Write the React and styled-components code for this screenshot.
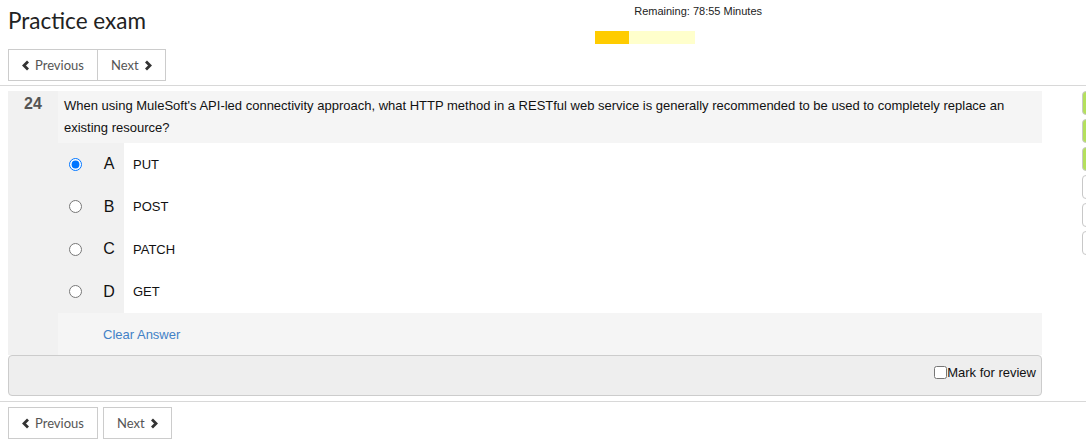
import React from "react";
import styled, { createGlobalStyle } from "styled-components";

const GlobalStyle = createGlobalStyle`
  html, body {
    margin: 0;
    padding: 0;
    background: #fff;
    overflow: hidden;
  }
  body {
    font-family: "Liberation Sans", Arial, sans-serif;
    color: #111;
  }
`;

const Header = styled.div`
  display: flex;
  height: 49px;
  padding: 0 8px;
  box-sizing: border-box;
`;

const TitleCol = styled.div`
  flex: 0 0 587px;
`;

const Title = styled.h1`
  margin: 0;
  padding-top: 7px;
  font-family: Lato, "Open Sans", sans-serif;
  font-weight: 400;
  font-size: 22.5px;
  line-height: 28px;
  color: #222;
`;

const Timer = styled.div`
  width: 167px;
  padding-top: 5px;
`;

const TimerText = styled.div`
  font-size: 11px;
  line-height: 13px;
  text-align: right;
  color: #222;
`;

const TimerBar = styled.div`
  margin-top: 13px;
  width: 100px;
  height: 13px;
  background: #ffffcc;
  display: flex;
`;

const TimerFill = styled.div`
  height: 100%;
  background: #ffcc00;
`;

const NavBar = styled.div`
  display: flex;
  gap: ${(p) => (p.$joined ? "0" : "5px")};
  padding: 0 8px;
`;

const NavButton = styled.button`
  display: flex;
  align-items: center;
  gap: 5px;
  height: 32px;
  padding: 0 13px;
  background: #fff;
  border: 1px solid #ccc;
  margin-left: ${(p) => (p.$joined ? "-1px" : "0")};
  font-family: Lato, "Open Sans", sans-serif;
  font-size: 13px;
  color: #555;
  cursor: pointer;
  &:first-child {
    margin-left: 0;
  }
`;

const Divider = styled.div`
  height: 1px;
  background: #d8d8d8;
  margin: ${(p) => p.$margin};
`;

const Main = styled.div`
  display: flex;
  padding-left: 8px;
  margin-top: 5px;
`;

const Content = styled.div`
  width: 1034px;
  flex: 0 0 1034px;
`;

const QuestionBlock = styled.div`
  display: flex;
`;

const NumberCol = styled.div`
  width: 50px;
  flex: 0 0 50px;
  background: #f1f1f1;
  text-align: center;
  font-weight: bold;
  font-size: 16px;
  line-height: 20px;
  padding-top: 3px;
  color: #555;
`;

const Body = styled.div`
  flex: 1;
`;

const QuestionText = styled.div`
  background: #f5f5f5;
  padding: 4px 6px;
  font-size: 13px;
  line-height: 22px;
  color: #111;
`;

const OptionRow = styled.div`
  display: flex;
  height: 42.5px;
`;

const OptionMark = styled.label`
  width: 66px;
  flex: 0 0 66px;
  box-sizing: border-box;
  background: #f1f1f1;
  display: flex;
  align-items: center;
  padding-left: 11px;
`;

const Radio = styled.input`
  margin: 0;
  width: 13px;
  height: 13px;
`;

const Letter = styled.span`
  width: 20px;
  margin-left: 17px;
  text-align: center;
  font-size: 16px;
  color: #111;
`;

const OptionText = styled.div`
  flex: 1;
  display: flex;
  align-items: center;
  padding-left: 9px;
  font-size: 13px;
  color: #111;
`;

const ClearRow = styled.div`
  height: 42px;
  display: flex;
  align-items: center;
  padding-left: 45px;
  background: #f5f5f5;
  font-size: 13px;
  color: #4281c6;
  cursor: pointer;
`;

const Footer = styled.div`
  height: 41px;
  box-sizing: border-box;
  border: 1px solid #ccc;
  border-radius: 4px;
  background: #eee;
  display: flex;
  justify-content: flex-end;
  padding: 9px 5px 0;
`;

const ReviewLabel = styled.label`
  display: flex;
  align-items: flex-start;
  font-size: 13px;
  line-height: 16px;
  color: #111;
`;

const Check = styled.input`
  margin: 1px 0 0;
  width: 13px;
  height: 13px;
`;

const Sidebar = styled.div`
  margin-left: 40px;
  display: flex;
  flex-direction: column;
  gap: 4px;
`;

const Tab = styled.div`
  width: 30px;
  height: 24px;
  box-sizing: border-box;
  border: 1px solid #c8c8c8;
  border-radius: 4px;
  background: ${(p) => (p.$done ? "#b4e05c" : "#fff")};
`;

const Chevron = ({ dir }) => (
  <svg width="8" height="11" viewBox="0 0 8 11">
    <polyline
      points={dir === "left" ? "6,1.5 2,5.5 6,9.5" : "2,1.5 6,5.5 2,9.5"}
      fill="none"
      stroke="#333"
      strokeWidth="2.8"
    />
  </svg>
);

const Pager = ({ joined }) => (
  <NavBar $joined={joined}>
    <NavButton $joined={joined}>
      <Chevron dir="left" />
      Previous
    </NavButton>
    <NavButton $joined={joined}>
      Next
      <Chevron dir="right" />
    </NavButton>
  </NavBar>
);

const options = [
  { letter: "A", text: "PUT", checked: true },
  { letter: "B", text: "POST" },
  { letter: "C", text: "PATCH" },
  { letter: "D", text: "GET" },
];

const tabs = [true, true, true, false, false, false];

export default function App() {
  return (
    <>
      <GlobalStyle />
      <Header>
        <TitleCol>
          <Title>Practice exam</Title>
        </TitleCol>
        <Timer>
          <TimerText>Remaining: 78:55 Minutes</TimerText>
          <TimerBar>
            <TimerFill style={{ width: "34%" }} />
          </TimerBar>
        </Timer>
      </Header>
      <Pager joined />
      <Divider $margin="4px 0 0" />
      <Main>
        <Content>
          <QuestionBlock>
            <NumberCol>24</NumberCol>
            <Body>
              <QuestionText>
                When using MuleSoft's API-led connectivity approach, what HTTP
                method in a RESTful web service is generally recommended to be
                used to completely replace an existing resource?
              </QuestionText>
              {options.map((o) => (
                <OptionRow key={o.letter}>
                  <OptionMark>
                    <Radio
                      type="radio"
                      name="answer"
                      defaultChecked={o.checked}
                    />
                    <Letter>{o.letter}</Letter>
                  </OptionMark>
                  <OptionText>{o.text}</OptionText>
                </OptionRow>
              ))}
              <ClearRow>Clear Answer</ClearRow>
            </Body>
          </QuestionBlock>
          <Footer>
            <ReviewLabel>
              <Check type="checkbox" />
              Mark for review
            </ReviewLabel>
          </Footer>
        </Content>
        <Sidebar>
          {tabs.map((done, i) => (
            <Tab key={i} $done={done} />
          ))}
        </Sidebar>
      </Main>
      <Divider $margin="5px 0 5px" />
      <Pager />
    </>
  );
}
